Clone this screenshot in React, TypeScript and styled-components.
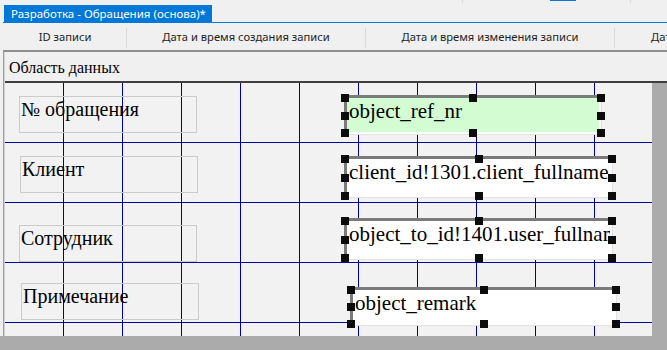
import React from "react";
import styled, { createGlobalStyle } from "styled-components";

const GlobalStyle = createGlobalStyle`
  html, body {
    margin: 0;
    padding: 0;
    background: #f0f0f0;
  }
  body {
    overflow: hidden;
  }
`;

const Window = styled.div`
  width: 667px;
  height: 350px;
  display: flex;
  flex-direction: column;
  background: #f0f0f0;
  overflow: hidden;
  font-family: "Noto Sans", "Liberation Sans", sans-serif;
`;

const TopEdge = styled.div`
  height: 5px;
  flex: none;
  display: flex;
  align-items: flex-start;
  padding-left: 462px;
`;

const EdgeMark = styled.span<{ $w: number; $gap: number; $blue?: boolean }>`
  display: block;
  width: ${(p) => p.$w}px;
  height: ${(p) => (p.$blue ? 1 : 2)}px;
  margin-left: ${(p) => p.$gap}px;
  background: ${(p) => (p.$blue ? "#0078d7" : "#d6d6d6")};
`;

const TabBar = styled.div`
  height: 17px;
  flex: none;
  display: flex;
  padding-left: 4px;
`;

const Tab = styled.div`
  background: #0078d7;
  color: #ffffff;
  font-size: 11.5px;
  line-height: 17px;
  padding: 0 6px 0 7px;
  white-space: nowrap;
`;

const TabLine = styled.div`
  height: 1px;
  flex: none;
  margin-left: 3px;
  background: #0078d7;
`;

const Header = styled.div`
  height: 27px;
  flex: none;
  display: flex;
  padding-left: 4px;
  overflow: hidden;
`;

const HeaderCell = styled.div<{ $w: number; $pad?: number }>`
  flex: none;
  width: ${(p) => p.$w}px;
  display: flex;
  align-items: center;
  justify-content: ${(p) => (p.$pad !== undefined ? "flex-start" : "center")};
  padding-left: ${(p) => p.$pad ?? 0}px;
  box-sizing: border-box;
  font-size: 11.2px;
  color: #1e1e1e;
  white-space: nowrap;
  padding-bottom: 1px;
`;

const HeaderSep = styled.div`
  flex: none;
  width: 1px;
  margin: 5px 0 2px;
  background: #d9d9d9;
`;

const DataFrame = styled.div`
  flex: 1;
  min-height: 0;
  display: flex;
  flex-direction: column;
  margin-left: 3px;
  border-left: 1px solid #9d9d9d;
  border-top: 2px solid #8e8e8e;
  padding-left: 1px;
  background: #d3d3d3;
`;

const SectionHeader = styled.div`
  flex: none;
  height: 29px;
  box-sizing: content-box;
  border-bottom: 2px solid #3e3e3e;
  background: #f0f0f0;
  padding-left: 4px;
  font-family: "Liberation Serif", "Times New Roman", serif;
  font-size: 16px;
  line-height: 27px;
  color: #000;
  & > span {
    display: block;
    margin-top: 2px;
  }
`;

const DesignRow = styled.div`
  flex: 1;
  min-height: 0;
  display: flex;
`;

const Surface = styled.div`
  flex: none;
  width: 647px;
  display: flex;
  flex-direction: column;
  overflow: hidden;
  background-color: #f2f2f2;
  background-image: linear-gradient(to right, transparent 58px, #0000a0 58px),
    linear-gradient(to bottom, transparent 59px, #0000a0 59px);
  background-size: 59px 100%, 100% 60px;
  background-repeat: repeat-x, repeat-y;
`;

const ScrollV = styled.div`
  flex: 1;
  background: #ababab;
`;

const BottomBar = styled.div`
  height: 14px;
  flex: none;
  background: #ababab;
`;

const Row = styled.div`
  flex: none;
  height: 60px;
  display: flex;
  align-items: flex-start;
`;

const Label = styled.div<{ $top: number; $left: number }>`
  flex: none;
  margin-top: ${(p) => p.$top}px;
  margin-left: ${(p) => p.$left}px;
  width: 178px;
  height: 37px;
  box-sizing: border-box;
  border: 1px solid #cbcbcb;
  padding: 1px 0 0 1px;
  font-family: "Liberation Serif", "Times New Roman", serif;
  font-size: 20px;
  color: #000;
  white-space: nowrap;
`;

const FieldFrame = styled.div<{ $top: number; $left: number; $w: number; $h: number }>`
  flex: none;
  position: relative;
  margin-top: ${(p) => p.$top}px;
  margin-left: ${(p) => p.$left}px;
  width: ${(p) => p.$w}px;
  height: ${(p) => p.$h}px;
  box-sizing: border-box;
  padding: 1px 4px 3px 3px;
`;

const FieldBox = styled.div<{ $fill: string }>`
  height: 100%;
  box-sizing: border-box;
  background: ${(p) => p.$fill};
  border-top: 3px solid #7b7b7b;
  border-left: 3px solid #7b7b7b;
  border-right: 2px solid #ffffff;
  border-bottom: 2px solid #ffffff;
  box-shadow: 1px 1px 0 #e2e2e2;
  padding: 1px 0 0 2px;
  font-family: "Liberation Serif", "Times New Roman", serif;
  font-size: 21px;
  color: #000;
  white-space: nowrap;
  overflow: hidden;
`;

const Handle = styled.span<{ $x: "l" | "c" | "r"; $y: "t" | "m" | "b" }>`
  position: absolute;
  width: 8px;
  height: 8px;
  background: #0c0c0c;
  left: ${(p) => (p.$x === "l" ? "0" : p.$x === "c" ? "calc(50% - 4px)" : "calc(100% - 8px)")};
  top: ${(p) => (p.$y === "t" ? "0" : p.$y === "m" ? "calc(50% - 4px)" : "calc(100% - 8px)")};
`;

type FieldSpec = {
  label: string;
  labelTop: number;
  labelLeft: number;
  field: string;
  fieldTop: number;
  fieldLeft: number;
  w: number;
  h: number;
  fill: string;
};

const rows: FieldSpec[] = [
  { label: "№ обращения", labelTop: 13, labelLeft: 14, field: "object_ref_nr", fieldTop: 11, fieldLeft: 144, w: 264, h: 43, fill: "#d3fcd3" },
  { label: "Клиент", labelTop: 13, labelLeft: 15, field: "client_id!1301.client_fullname", fieldTop: 12, fieldLeft: 143, w: 275, h: 45, fill: "#ffffff" },
  { label: "Сотрудник", labelTop: 22, labelLeft: 14, field: "object_to_id!1401.user_fullname", fieldTop: 14, fieldLeft: 144, w: 275, h: 45, fill: "#ffffff" },
  { label: "Примечание", labelTop: 20, labelLeft: 16, field: "object_remark", fieldTop: 23, fieldLeft: 148, w: 273, h: 42, fill: "#ffffff" },
];

const handles: Array<["l" | "c" | "r", "t" | "m" | "b"]> = [
  ["l", "t"], ["c", "t"], ["r", "t"],
  ["l", "m"], ["r", "m"],
  ["l", "b"], ["c", "b"], ["r", "b"],
];

export default function App() {
  return (
    <Window>
      <GlobalStyle />
      <TopEdge>
        <EdgeMark $w={1} $gap={0} />
        <EdgeMark $w={26} $gap={87} $blue />
        <EdgeMark $w={1} $gap={54} />
      </TopEdge>
      <TabBar>
        <Tab>Разработка - Обращения (основа)*</Tab>
      </TabBar>
      <TabLine />
      <Header>
        <HeaderCell $w={122}>ID записи</HeaderCell>
        <HeaderSep />
        <HeaderCell $w={238}>Дата и время создания записи</HeaderCell>
        <HeaderSep />
        <HeaderCell $w={248}>Дата и время изменения записи</HeaderCell>
        <HeaderSep />
        <HeaderCell $w={250} $pad={36}>Дата и время удаления записи</HeaderCell>
      </Header>
      <DataFrame>
        <SectionHeader>
          <span>Область данных</span>
        </SectionHeader>
        <DesignRow>
          <Surface>
            {rows.map((r) => (
              <Row key={r.field}>
                <Label $top={r.labelTop} $left={r.labelLeft}>
                  {r.label}
                </Label>
                <FieldFrame $top={r.fieldTop} $left={r.fieldLeft} $w={r.w} $h={r.h}>
                  <FieldBox $fill={r.fill}>{r.field}</FieldBox>
                  {handles.map(([x, y]) => (
                    <Handle key={x + y} $x={x} $y={y} />
                  ))}
                </FieldFrame>
              </Row>
            ))}
          </Surface>
          <ScrollV />
        </DesignRow>
      </DataFrame>
      <BottomBar />
    </Window>
  );
}
